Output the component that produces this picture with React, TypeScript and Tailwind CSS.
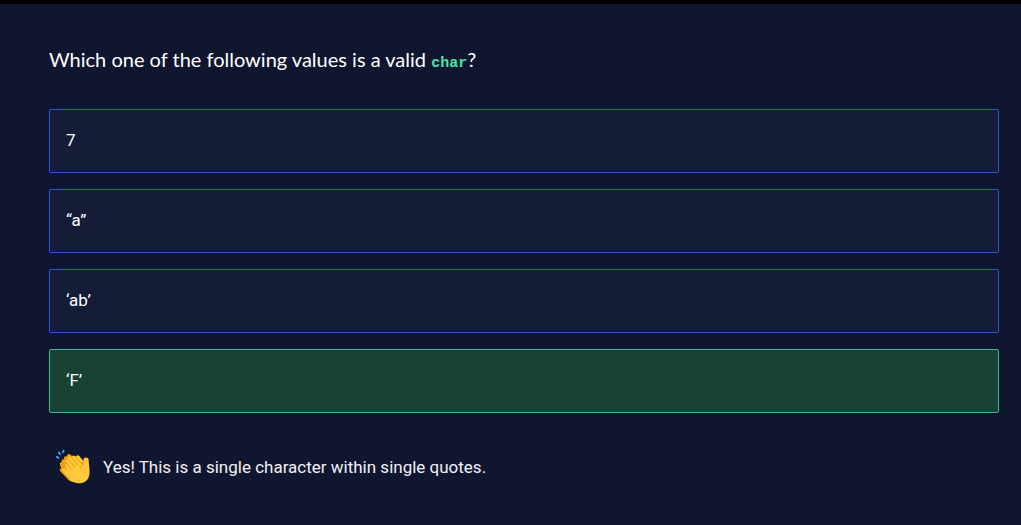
const choices = [
  { label: '7', correct: false },
  { label: '“a”', correct: false },
  { label: '‘ab’', correct: false },
  { label: '‘F’', correct: true },
];

function ClappingHands() {
  return (
    <svg viewBox="0 0 36 36" className="size-9 shrink-0" role="img" aria-label="Clapping hands">
      <g fill="#4aa3f5">
        <path d="M1 7.200l1.200-.4 2.400 1.900-.6 1.200-2.600-.9z" />
        <path d="M2.900 3l1.300-.4 1.900 2.600-.9 1-1.900-1.600z" />
        <path d="M6.900 3.800L8 .8l1.500.3-.2 1.500-1.400 1.900z" />
      </g>
      <path
        fill="#f59f0a"
        d="M5 15.800c-.8-1.500.5-2.900 1.900-2.300-1-2.100.5-3.800 2.200-3-.8-2.400 1.200-4 2.800-2.900-.1-2.200 2.200-3.200 3.700-1.900l12 11-3 14.500c-4.500 2.800-9.500 2.200-12.200-1.500L5.500 22.500c-1.300-1.500-.8-2.800.7-3z"
      />
      <path
        fill="#ffc83d"
        d="M10.300 17.600c-1.400-1.900.6-3.900 2.400-2.300l-1.600-2c-1.500-2.100.9-4 2.600-2.300l-.4-.6c-1.400-2 1-3.900 2.700-2.200l.9 1c-.9-2 1.500-3.800 3.200-1.900l.8.9c-.3-1.900 2-2.800 3.400-1.100l3.800 4.700.5-1.700c.6-2.400 4.600-2.300 5 .5l.5 5.800c.4 3 .5 5.200.4 8-.3 6-4.500 9.900-10.600 9.900-4.300 0-7.300-1.800-9.600-4.600L7.700 22.300c-1.500-2 .7-4 2.500-2.300l2.300 2.300z"
      />
      <path
        d="M10.600 13.300l6 7.100M13.300 10.400l6 7M16.700 8.500l5.800 7M20.400 7.400l5 6c.8 1 1.700 1.400 2.600 1.600M8 14.300l2.200 2.600M28.300 11.800l-.3 3.200c-1.500 1.100-2.300 2.400-2.400 4"
        fill="none"
        stroke="#e38b08"
        strokeWidth=".8"
        strokeLinecap="round"
      />
    </svg>
  );
}

export default function App() {
  return (
    <main className="min-h-screen border-t-4 border-black bg-[#10162f] pt-10 pr-[22px] pb-9 pl-[49px] font-['Roboto',sans-serif] text-white">
      <h1 className="font-['Lato',sans-serif] text-xl leading-[30px] font-normal">
        Which one of the following values is a valid{' '}
        <code className="font-['Liberation_Mono',monospace] text-[15px] leading-4 font-bold text-[#4be3ac]">char</code>?
      </h1>
      <div className="mt-[35px] flex flex-col gap-4">
        {choices.map(({ label, correct }) => (
          <button
            key={label}
            type="button"
            aria-pressed={correct}
            className={`h-16 rounded-xs border px-4 text-left text-[17px] ${
              correct ? 'border-[#41b690] bg-[#194134]' : 'border-[#2c5bc8] bg-[#151c37]'
            }`}
          >
            {label}
          </button>
        ))}
      </div>
      <div className="mt-9 flex items-center gap-3 pl-1.5 text-[#f0f0f4]" role="status">
        <ClappingHands />
        <p className="text-[17px] leading-6">Yes! This is a single character within single quotes.</p>
      </div>
    </main>
  );
}
